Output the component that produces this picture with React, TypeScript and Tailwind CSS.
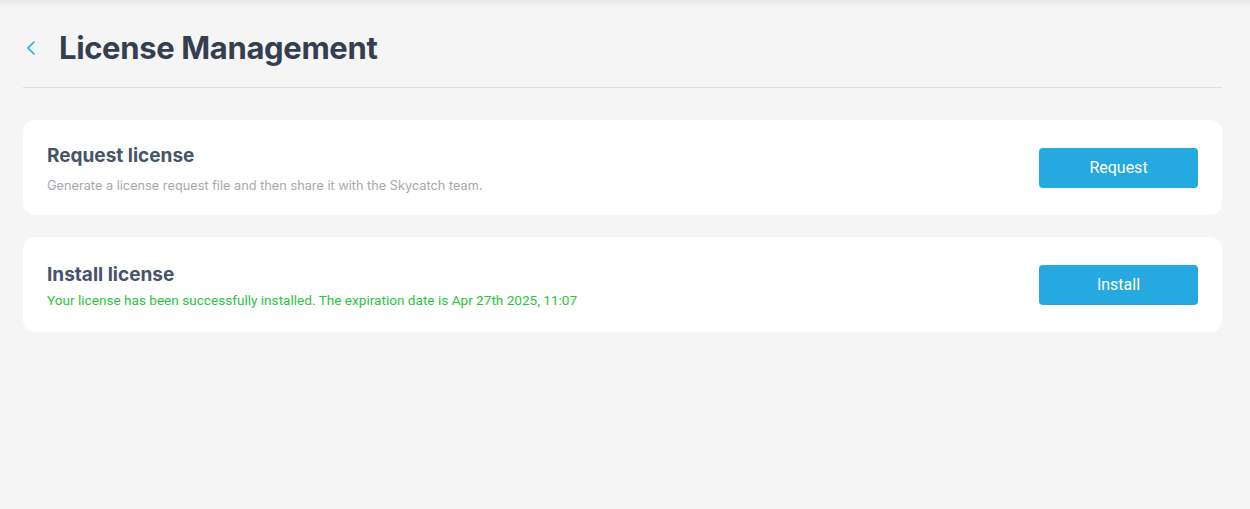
import React from 'react';

const LicenseCard: React.FC<{
  title: string;
  description: string;
  descriptionClass: string;
  action: string;
}> = ({ title, description, descriptionClass, action }) => (
  <div className="bg-white rounded-xl h-[95px] pl-6 pr-6 flex items-center justify-between">
    <div className="pt-[4px]">
      <h3 className="text-[19px] leading-[24px] font-bold text-[#465467] font-['Inter',sans-serif]">{title}</h3>
      <p className={descriptionClass}>{description}</p>
    </div>
    <button className="w-[159px] h-[40px] rounded bg-[#25a9e0] text-white text-[16px] font-['Roboto',sans-serif]">
      {action}
    </button>
  </div>
);

export default function App() {
  return (
    <div className="min-h-[509px] bg-[#f5f5f5] relative font-['Inter',sans-serif]">
      <div className="absolute inset-x-0 top-0 h-[8px] bg-gradient-to-b from-black/[0.06] to-transparent" />
      <div className="pl-[23px] pr-[28px] pt-[28px]">
        <div className="flex items-center h-[40px] border-b border-[#dedede] box-content pb-[19px]">
          <button className="w-[36px] pl-[2px] flex items-center text-[#29a8e0]">
            <svg width="12" height="16" viewBox="0 0 12 16" fill="none" stroke="currentColor" strokeWidth="1.6" strokeLinecap="round" strokeLinejoin="round">
              <path d="M9 2 L3 8 L9 14" />
            </svg>
          </button>
          <h1 className="text-[31px] font-bold text-[#343e4f] tracking-[-0.35px]">License Management</h1>
        </div>
        <div className="mt-[32px] flex flex-col gap-[22px]">
          <LicenseCard
            title="Request license"
            description="Generate a license request file and then share it with the Skycatch team."
            descriptionClass="mt-[8px] text-[12.75px] text-[#a6a9ae] font-['Inter',sans-serif]"
            action="Request"
          />
          <LicenseCard
            title="Install license"
            description="Your license has been successfully installed. The expiration date is Apr 27th 2025, 11:07"
            descriptionClass="mt-[3px] text-[13.6px] text-[#2bc43c] font-['Roboto',sans-serif]"
            action="Install"
          />
        </div>
      </div>
    </div>
  );
}
